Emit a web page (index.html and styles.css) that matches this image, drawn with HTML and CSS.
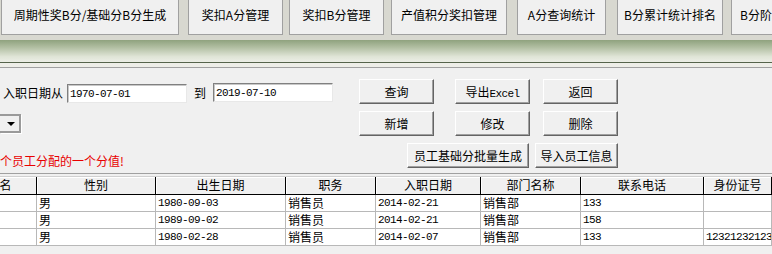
FILE: index.html
```html
<!DOCTYPE html>
<html lang="zh-CN">
<head>
    <meta charset="UTF-8">
    <title>员工信息</title>
    <link rel="stylesheet" href="styles.css">
</head>
<body>
    <div class="tabbar">
        <button class="tab t1">周期性奖B分/基础分B分生成</button>
        <button class="tab t2">奖扣A分管理</button>
        <button class="tab t3">奖扣B分管理</button>
        <button class="tab t4">产值积分奖扣管理</button>
        <button class="tab t5">A分查询统计</button>
        <button class="tab t6">B分累计统计排名</button>
        <button class="tab t7">B分阶段统计</button>
    </div>
    <div class="greenbar"></div>
    <div class="bar-edge"></div>

    <div class="panel">
        <div class="row">
            <div class="row-left">
                <span class="label first">入职日期从</span>
                <input class="field mono" type="text" value="1970-07-01">
                <span class="label to">到</span>
                <input class="field mono up" type="text" value="2019-07-10">
            </div>
            <button class="btn">查询</button>
            <button class="btn mid">导出<span class="mono">Excel</span></button>
            <button class="btn last">返回</button>
        </div>
        <div class="row">
            <div class="row-left">
                <div class="combo"><span class="arrow"></span></div>
            </div>
            <button class="btn">新增</button>
            <button class="btn mid">修改</button>
            <button class="btn last">删除</button>
        </div>
        <div class="row">
            <div class="row-left wide">
                <span class="warn">个员工分配的一个分值!</span>
            </div>
            <button class="btn long">员工基础分批量生成</button>
            <button class="btn import">导入员工信息</button>
        </div>
    </div>

    <div class="grid">
        <div class="grid-row head">
            <div class="cell">姓名</div>
            <div class="cell">性别</div>
            <div class="cell">出生日期</div>
            <div class="cell">职务</div>
            <div class="cell">入职日期</div>
            <div class="cell">部门名称</div>
            <div class="cell">联系电话</div>
            <div class="cell">身份证号</div>
        </div>
        <div class="grid-row">
            <div class="cell"></div>
            <div class="cell">男</div>
            <div class="cell mono">1980-09-03</div>
            <div class="cell">销售员</div>
            <div class="cell mono">2014-02-21</div>
            <div class="cell">销售部</div>
            <div class="cell mono">133</div>
            <div class="cell mono"></div>
        </div>
        <div class="grid-row">
            <div class="cell"></div>
            <div class="cell">男</div>
            <div class="cell mono">1989-09-02</div>
            <div class="cell">销售员</div>
            <div class="cell mono">2014-02-21</div>
            <div class="cell">销售部</div>
            <div class="cell mono">158</div>
            <div class="cell mono"></div>
        </div>
        <div class="grid-row">
            <div class="cell"></div>
            <div class="cell">男</div>
            <div class="cell mono">1980-02-28</div>
            <div class="cell">销售员</div>
            <div class="cell mono">2014-02-07</div>
            <div class="cell">销售部</div>
            <div class="cell mono">133</div>
            <div class="cell mono">12321232123</div>
        </div>
    </div>
</body>
</html>
```

FILE: styles.css
```css
* {
    box-sizing: border-box;
}

body {
    margin: 0;
    width: 772px;
    height: 254px;
    overflow: hidden;
    background: #f0f0f0;
    font-family: "Noto Sans CJK SC", sans-serif;
    font-size: 12px;
    color: #000;
}

.mono {
    font-family: "Liberation Mono", "Noto Sans CJK SC", monospace;
    font-size: 11px;
    letter-spacing: -0.6px;
}

/* top toolbar */
.tabbar {
    display: flex;
    height: 40px;
    padding-left: 1px;
    background: #d8d8d0;
    white-space: nowrap;
}

.tab {
    flex: none;
    height: 35px;
    padding: 0 0 5px;
    border: 1px solid #a0a0a0;
    border-top: none;
    background: #f0f0f0;
    font-family: "Noto Sans CJK SC", sans-serif;
    font-size: 12px;
    color: #000;
    overflow: hidden;
}

.t1 { width: 178px; }
.t2 { width: 95px; margin-left: 9px; }
.t3 { width: 95px; margin-left: 6px; }
.t4 { width: 116px; margin-left: 7px; }
.t5 { width: 89px; margin-left: 10px; }
.t6 { width: 106px; margin-left: 11px; }
.t7 { width: 100px; margin-left: 8px; text-align: left; padding-left: 8px; }

.greenbar {
    height: 22px;
    background: linear-gradient(to bottom, #8fa27e 0%, #b3c0a4 35%, #dfe4d6 75%, #eceee6 100%);
}

.bar-edge {
    height: 6px;
    border-top: 1px solid #56644b;
    border-bottom: 1px solid #a0a0a0;
    background: #eeeee8;
}

/* query panel */
.panel {
    padding: 11px 0 5px;
    border-bottom: 1px solid #a0a0a0;
    display: flex;
    flex-direction: column;
    gap: 7px;
}

.row {
    display: flex;
    height: 25px;
}

.row-left {
    width: 359px;
    display: flex;
    align-items: flex-start;
    padding-top: 4px;
}

.row-left.wide {
    width: 407px;
}

.label {
    line-height: 19px;
}

.label.first {
    width: 64px;
    margin-left: 3px;
}

.label.to {
    width: 19px;
    margin-left: 7px;
}

.field {
    width: 120px;
    height: 19px;
    margin: 1px 0 0;
    padding: 0 0 0 2px;
    border: 1px solid;
    border-color: #808080 #e8e8e8 #e8e8e8 #808080;
    box-shadow: inset 1px 1px #c8c8c8;
    background: #fff;
    color: #000;
}

.field.up {
    margin-top: 0;
}

.btn {
    flex: none;
    width: 75px;
    height: 25px;
    padding: 0;
    border: 1px solid;
    border-color: #fff #646464 #646464 #fff;
    box-shadow: inset -1px -1px #a0a0a0;
    background: #f0f0f0;
    font-family: "Noto Sans CJK SC", sans-serif;
    font-size: 12px;
    color: #000;
}

.btn.mid { margin-left: 21px; }
.btn.last { margin-left: 13px; }
.btn.long { width: 122px; }
.btn.import { width: 83px; margin-left: 6px; }

.combo {
    width: 21px;
    height: 19px;
    margin-top: -1px;
    border: 2px solid #9a9a9a;
    border-left: none;
    box-shadow: 1px 1px #fff;
    background: #f0f0f0;
    display: flex;
    align-items: center;
    justify-content: center;
    padding-left: 3px;
}

.arrow {
    width: 0;
    height: 0;
    border-left: 4px solid transparent;
    border-right: 4px solid transparent;
    border-top: 4px solid #000;
}

.warn {
    margin-top: 7px;
    color: #e80000;
    line-height: 14px;
}

/* data grid */
.grid {
    margin-top: 2px;
    margin-left: -37px;
    border-top: 1px solid #d0d0d0;
}

.grid-row {
    display: grid;
    grid-template-columns: 74px 119px 130px 90px 105px 100px 123px 68px;
    height: 17px;
    background: #fff;
}

.cell {
    padding-left: 2px;
    line-height: 16px;
    border-right: 1px solid #b8b8b8;
    border-bottom: 1px solid #b8b8b8;
    white-space: nowrap;
    overflow: hidden;
}

.head {
    height: 18px;
    background: #f0f0f0;
}

.head .cell {
    padding: 0;
    text-align: center;
    border-right-color: #000;
    border-bottom-color: #000;
    box-shadow: inset 1px 1px #fff;
}
```
